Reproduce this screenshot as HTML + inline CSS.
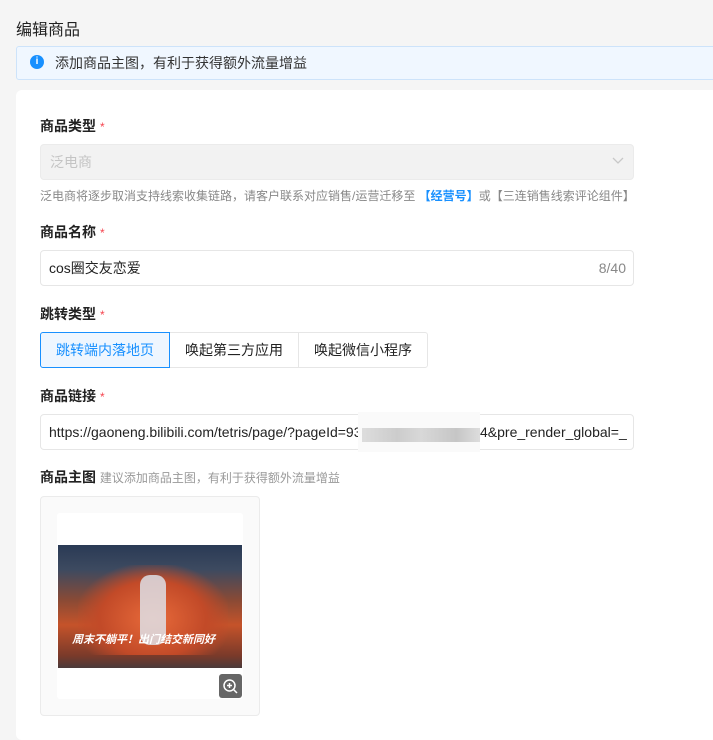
<!DOCTYPE html>
<html><head><meta charset="utf-8"><style>
*{box-sizing:border-box;margin:0;padding:0}
body{width:713px;height:724px;overflow:hidden;background:#f5f5f5;font-family:"Liberation Sans","Noto Sans CJK SC",sans-serif;color:#222;position:relative}
.a{position:absolute}
.lbl{position:absolute;left:40px;font-size:14px;font-weight:bold;color:#222}
.lbl i{color:#f5454f;font-style:normal;font-weight:normal;font-size:12px;margin-left:4px}
.inp{position:absolute;left:40px;width:594px;height:36px;border:1px solid #e6e6e6;border-radius:4px;background:#fff;font-size:14px;padding-left:8px;line-height:34px;color:#222}
</style></head><body>
<div class="a" style="left:16px;top:16px;font-size:16px;color:#222">编辑商品</div>
<div class="a" style="left:16px;top:46px;width:710px;height:34px;background:#f0f7ff;border:1px solid #cde3fa;border-radius:3px"></div>
<div class="a" style="left:30px;top:55px;width:14px;height:14px;border-radius:50%;background:#1890ff;color:#fff;font-size:10px;font-weight:bold;text-align:center;line-height:14px">i</div>
<div class="a" style="left:55px;top:53px;font-size:14px;color:#333">添加商品主图，有利于获得额外流量增益</div>
<div class="a" style="left:16px;top:90px;width:710px;height:650px;background:#fff;border-radius:6px"></div>

<div class="lbl" style="top:116px">商品类型<i>*</i></div>
<div class="inp" style="top:144px;background:#f2f2f2;border-color:#ebebeb;color:#c4c4c4;padding-left:9px">泛电商</div>
<svg class="a" style="left:612px;top:156px" width="12" height="10"><path d="M1 2l5 5 5-5" stroke="#c8c8c8" fill="none" stroke-width="1.3"/></svg>
<div class="a" style="left:40px;top:187px;font-size:12px;color:#888">泛电商将逐步取消支持线索收集链路，请客户联系对应销售/运营迁移至 <span style="color:#1890ff;font-weight:bold">【经营号】</span>或【三连销售线索评论组件】</div>

<div class="lbl" style="top:222px">商品名称<i>*</i></div>
<div class="inp" style="top:250px">cos圈交友恋爱<span style="position:absolute;right:7px;color:#888">8/40</span></div>

<div class="lbl" style="top:304px">跳转类型<i>*</i></div>
<div class="a" style="left:40px;top:332px;width:130px;height:36px;border:1px solid #1890ff;background:#eef6ff;color:#1890ff;font-size:14px;text-align:center;line-height:34px;border-radius:3px 0 0 3px;z-index:2">跳转端内落地页</div>
<div class="a" style="left:169px;top:332px;width:130px;height:36px;border:1px solid #e6e6e6;font-size:14px;text-align:center;line-height:34px;background:#fff">唤起第三方应用</div>
<div class="a" style="left:298px;top:332px;width:130px;height:36px;border:1px solid #e6e6e6;font-size:14px;text-align:center;line-height:34px;background:#fff;border-radius:0 3px 3px 0">唤起微信小程序</div>

<div class="lbl" style="top:386px">商品链接<i>*</i></div>
<div class="inp" style="top:414px;white-space:nowrap;overflow:hidden">https://gaoneng.bilibili.com/tetris/page/?pageId=93</div>
<div class="a" style="left:480px;top:414px;font-size:14px;line-height:36px;white-space:nowrap">4&amp;pre_render_global=_</div>
<div class="a" style="left:358px;top:412px;width:122px;height:40px;background:#fafafa"></div>
<div class="a" style="left:362px;top:428px;width:118px;height:14px;background:linear-gradient(90deg,#ddd,#ccc 30%,#d8d8d8 50%,#c6c6c6 80%,#ddd)"></div>

<div class="a" style="left:40px;top:467px;font-size:14px;font-weight:bold;color:#222">商品主图 <span style="font-weight:normal;font-size:12px;color:#999">建议添加商品主图，有利于获得额外流量增益</span></div>
<div class="a" style="left:40px;top:496px;width:220px;height:220px;background:#fafafa;border:1px solid #ebebeb;border-radius:4px"></div>
<div class="a" style="left:57px;top:513px;width:186px;height:186px;background:#fff;border-radius:3px"></div>
<div class="a" style="left:58px;top:545px;width:184px;height:123px;background:linear-gradient(180deg,#2a3a55 0%,#3d4a60 20%,#8a4a35 45%,#c5532a 65%,#7a3a2a 90%,#4a3a3a 100%)">
 <div class="a" style="left:20px;top:20px;width:150px;height:90px;background:radial-gradient(ellipse at 50% 60%,#e86a3a 0%,#c24a28 50%,transparent 75%)"></div>
 <div class="a" style="left:82px;top:30px;width:26px;height:70px;background:#dfe8f3;border-radius:10px;opacity:.8"></div>
 <div class="a" style="left:14px;top:86px;color:#fff;font-size:11px;font-weight:bold;font-style:italic;white-space:nowrap">周末不躺平！出门结交新同好</div>
</div>
<div class="a" style="left:219px;top:674px;width:23px;height:24px;background:#666;border-radius:3px"></div>
<svg class="a" style="left:222px;top:678px" width="17" height="17"><circle cx="7.5" cy="7.5" r="5.5" stroke="#fff" stroke-width="1.5" fill="none"/><path d="M5 7.5h5M7.5 5v5M11.5 11.5l3.5 3.5" stroke="#fff" stroke-width="1.5"/></svg>
</body></html>
